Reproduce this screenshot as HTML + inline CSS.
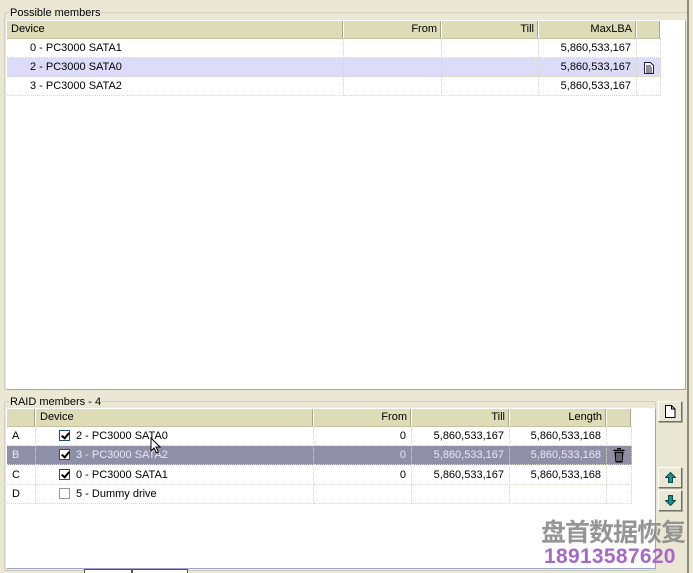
<!DOCTYPE html>
<html><head><meta charset="utf-8"><style>
*{margin:0;padding:0;box-sizing:border-box}
body{width:693px;height:573px;background:#EAE8D4;position:relative;overflow:hidden;font-family:"Liberation Sans",Tahoma,sans-serif;font-size:11px;color:#000}
.a{position:absolute}
.gb{position:absolute;border:1px solid #D0D0BF;border-radius:2px}
.lg{position:absolute;background:#EAE8D4;padding:0 1px;font-size:11px;line-height:12px;color:#000}
.list{position:absolute;background:#fff;border:1px solid #7F9DB9;overflow:hidden}
.hd{position:absolute;top:0;height:18px;background:#DEDBB7;border-right:1px solid #fff;border-bottom:1px solid #C5C2A0;line-height:17px;padding:0 4px;box-shadow:inset -1px 0 0 #A7A58D}
.r{text-align:right}
.row{position:absolute;left:0;height:19px;width:100%}
.c{position:absolute;top:0;height:19px;line-height:19px;border-right:1px dotted #D8D8C8;border-bottom:1px dotted #D8D8C8;padding:0 5px;white-space:nowrap}
.cb{display:inline-block;width:11px;height:11px;border:1px solid #1C5180;background:#fff;vertical-align:-2px;margin-right:6px;position:relative}
.cb.k::after{content:"";position:absolute;left:3px;top:0px;width:3px;height:6px;border:solid #000;border-width:0 2px 2px 0;transform:rotate(40deg)}
.btn{position:absolute;width:24px;height:21px;background:#EAE8D4;border:1px solid;border-color:#fff #716F64 #716F64 #fff;box-shadow:1px 1px 0 #ACA899}
</style></head><body>
<div class="gb" style="left:4px;top:12px;width:684px;height:378px"></div>
<div class="lg" style="left:9px;top:7px">Possible members</div>
<div class="list" style="left:6px;top:20px;width:680px;height:370px;border-color:#fff #9DA5C4 #9DA5C4 #fff">
 <div class="hd" style="left:0;width:337px">Device</div>
 <div class="hd r" style="left:337px;width:98px">From</div>
 <div class="hd r" style="left:435px;width:97px">Till</div>
 <div class="hd r" style="left:532px;width:98px">MaxLBA</div>
 <div class="hd" style="left:630px;width:24px"></div>
 <div class="row" style="top:18px">
  <div class="c" style="left:0;width:337px;padding-left:23px">0 - PC3000 SATA1</div>
  <div class="c" style="left:337px;width:98px"></div><div class="c" style="left:435px;width:97px"></div>
  <div class="c r" style="left:532px;width:98px">5,860,533,167</div><div class="c" style="left:630px;width:24px"></div></div>
 <div class="row" style="top:37px;background:#DCDCF8;width:654px">
  <div class="c" style="left:0;width:337px;padding-left:23px">2 - PC3000 SATA0</div>
  <div class="c" style="left:337px;width:98px"></div><div class="c" style="left:435px;width:97px"></div>
  <div class="c r" style="left:532px;width:98px">5,860,533,167</div><div class="c" style="left:630px;width:24px">
   <svg class="a" style="left:7px;top:4px" width="10" height="12"><path d="M.5 .5h6l3 3v8h-9z" fill="#fff" stroke="#223"/><path d="M2 4h5M2 6h6M2 8h6M2 10h6" stroke="#223"/></svg></div></div>
 <div class="row" style="top:56px">
  <div class="c" style="left:0;width:337px;padding-left:23px">3 - PC3000 SATA2</div>
  <div class="c" style="left:337px;width:98px"></div><div class="c" style="left:435px;width:97px"></div>
  <div class="c r" style="left:532px;width:98px">5,860,533,167</div><div class="c" style="left:630px;width:24px"></div></div>
</div>
<div class="a" style="left:687px;top:0;width:2px;height:573px;background:#8E8C7C"></div>
<div class="gb" style="left:4px;top:401px;width:652px;height:170px"></div>
<div class="lg" style="left:9px;top:396px">RAID members - 4</div>
<div class="list" style="left:6px;top:408px;width:650px;height:161px;border-color:#fff #9DA5C4 #9DA5C4 #fff">
 <div class="hd" style="left:0;width:29px"></div>
 <div class="hd" style="left:29px;width:278px">Device</div>
 <div class="hd r" style="left:307px;width:98px">From</div>
 <div class="hd r" style="left:405px;width:98px">Till</div>
 <div class="hd r" style="left:503px;width:97px">Length</div>
 <div class="hd" style="left:600px;width:25px"></div>
 <div class="row" style="top:18px">
  <div class="c" style="left:0;width:29px">A</div>
  <div class="c" style="left:29px;width:278px;padding-left:23px"><span class="cb k"></span>2 - PC3000 SATA0</div>
  <div class="c r" style="left:307px;width:98px">0</div><div class="c r" style="left:405px;width:98px">5,860,533,167</div>
  <div class="c r" style="left:503px;width:97px">5,860,533,168</div><div class="c" style="left:600px;width:25px"></div></div>
 <div class="row" style="top:37px;background:#8F8FA8;color:#E8E8F4;width:625px">
  <div class="c" style="left:0;width:29px">B</div>
  <div class="c" style="left:29px;width:278px;padding-left:23px"><span class="cb k"></span>3 - PC3000 SATA2</div>
  <div class="c r" style="left:307px;width:98px">0</div><div class="c r" style="left:405px;width:98px">5,860,533,167</div>
  <div class="c r" style="left:503px;width:97px">5,860,533,168</div><div class="c" style="left:600px;width:25px">
   <svg class="a" style="left:6px;top:2px" width="12" height="15"><path d="M4 .5h4M.5 2.5h11" stroke="#000" stroke-width="1.5"/><path d="M1.5 4h9l-1 10.5h-7z" fill="#000"/><path d="M4 5v8M6 5v8M8 5v8" stroke="#ccc"/></svg></div></div>
 <div class="row" style="top:57px">
  <div class="c" style="left:0;width:29px">C</div>
  <div class="c" style="left:29px;width:278px;padding-left:23px"><span class="cb k"></span>0 - PC3000 SATA1</div>
  <div class="c r" style="left:307px;width:98px">0</div><div class="c r" style="left:405px;width:98px">5,860,533,167</div>
  <div class="c r" style="left:503px;width:97px">5,860,533,168</div><div class="c" style="left:600px;width:25px"></div></div>
 <div class="row" style="top:76px">
  <div class="c" style="left:0;width:29px">D</div>
  <div class="c" style="left:29px;width:278px;padding-left:23px"><span class="cb" style="border-color:#999"></span>5 - Dummy drive</div>
  <div class="c r" style="left:307px;width:98px"></div><div class="c r" style="left:405px;width:98px"></div>
  <div class="c r" style="left:503px;width:97px"></div><div class="c" style="left:600px;width:25px"></div></div>
 <svg class="a" style="left:143px;top:28px" width="12" height="18"><path d="M1 1v13l3-3 2.5 5 2-1-2.5-5h4z" fill="#fff" stroke="#000"/></svg>
</div>
<div class="btn" style="left:658px;top:401px"><svg class="a" style="left:6px;top:3px" width="11" height="13"><path d="M.5 .5h6l3.5 3.5v8.5h-9.5z" fill="#fff" stroke="#000"/><path d="M6.5 .5v3.5h3.5" fill="none" stroke="#000"/></svg></div>
<div class="btn" style="left:658px;top:467px"><svg class="a" style="left:6px;top:4px" width="11" height="11"><path d="M5.5 .5l5 5h-3v5h-4v-5h-3z" fill="#1E8C8C" stroke="#0B4B4B"/></svg></div>
<div class="btn" style="left:658px;top:490px"><svg class="a" style="left:6px;top:4px" width="11" height="11"><path d="M5.5 10.5l5-5h-3v-5h-4v5h-3z" fill="#1E8C8C" stroke="#0B4B4B"/></svg></div>
<div class="a" style="left:84px;top:569px;width:48px;height:4px;border:1px solid #555;border-bottom:none;background:#fff"></div>
<div class="a" style="left:132px;top:569px;width:56px;height:4px;border:1px solid #555;border-bottom:none;background:#fff"></div>
<div class="a" style="left:541px;top:516px;font-family:'Noto Sans CJK SC',sans-serif;font-size:25px;font-weight:bold;color:#8A8A8A;letter-spacing:-1px;line-height:30px;opacity:.9">盘首数据恢复</div>
<div class="a" style="left:544px;top:546px;font-family:'Liberation Sans',sans-serif;font-size:21px;font-weight:bold;color:#A868C8;line-height:22px;letter-spacing:0.3px">18913587620</div>
</body></html>
